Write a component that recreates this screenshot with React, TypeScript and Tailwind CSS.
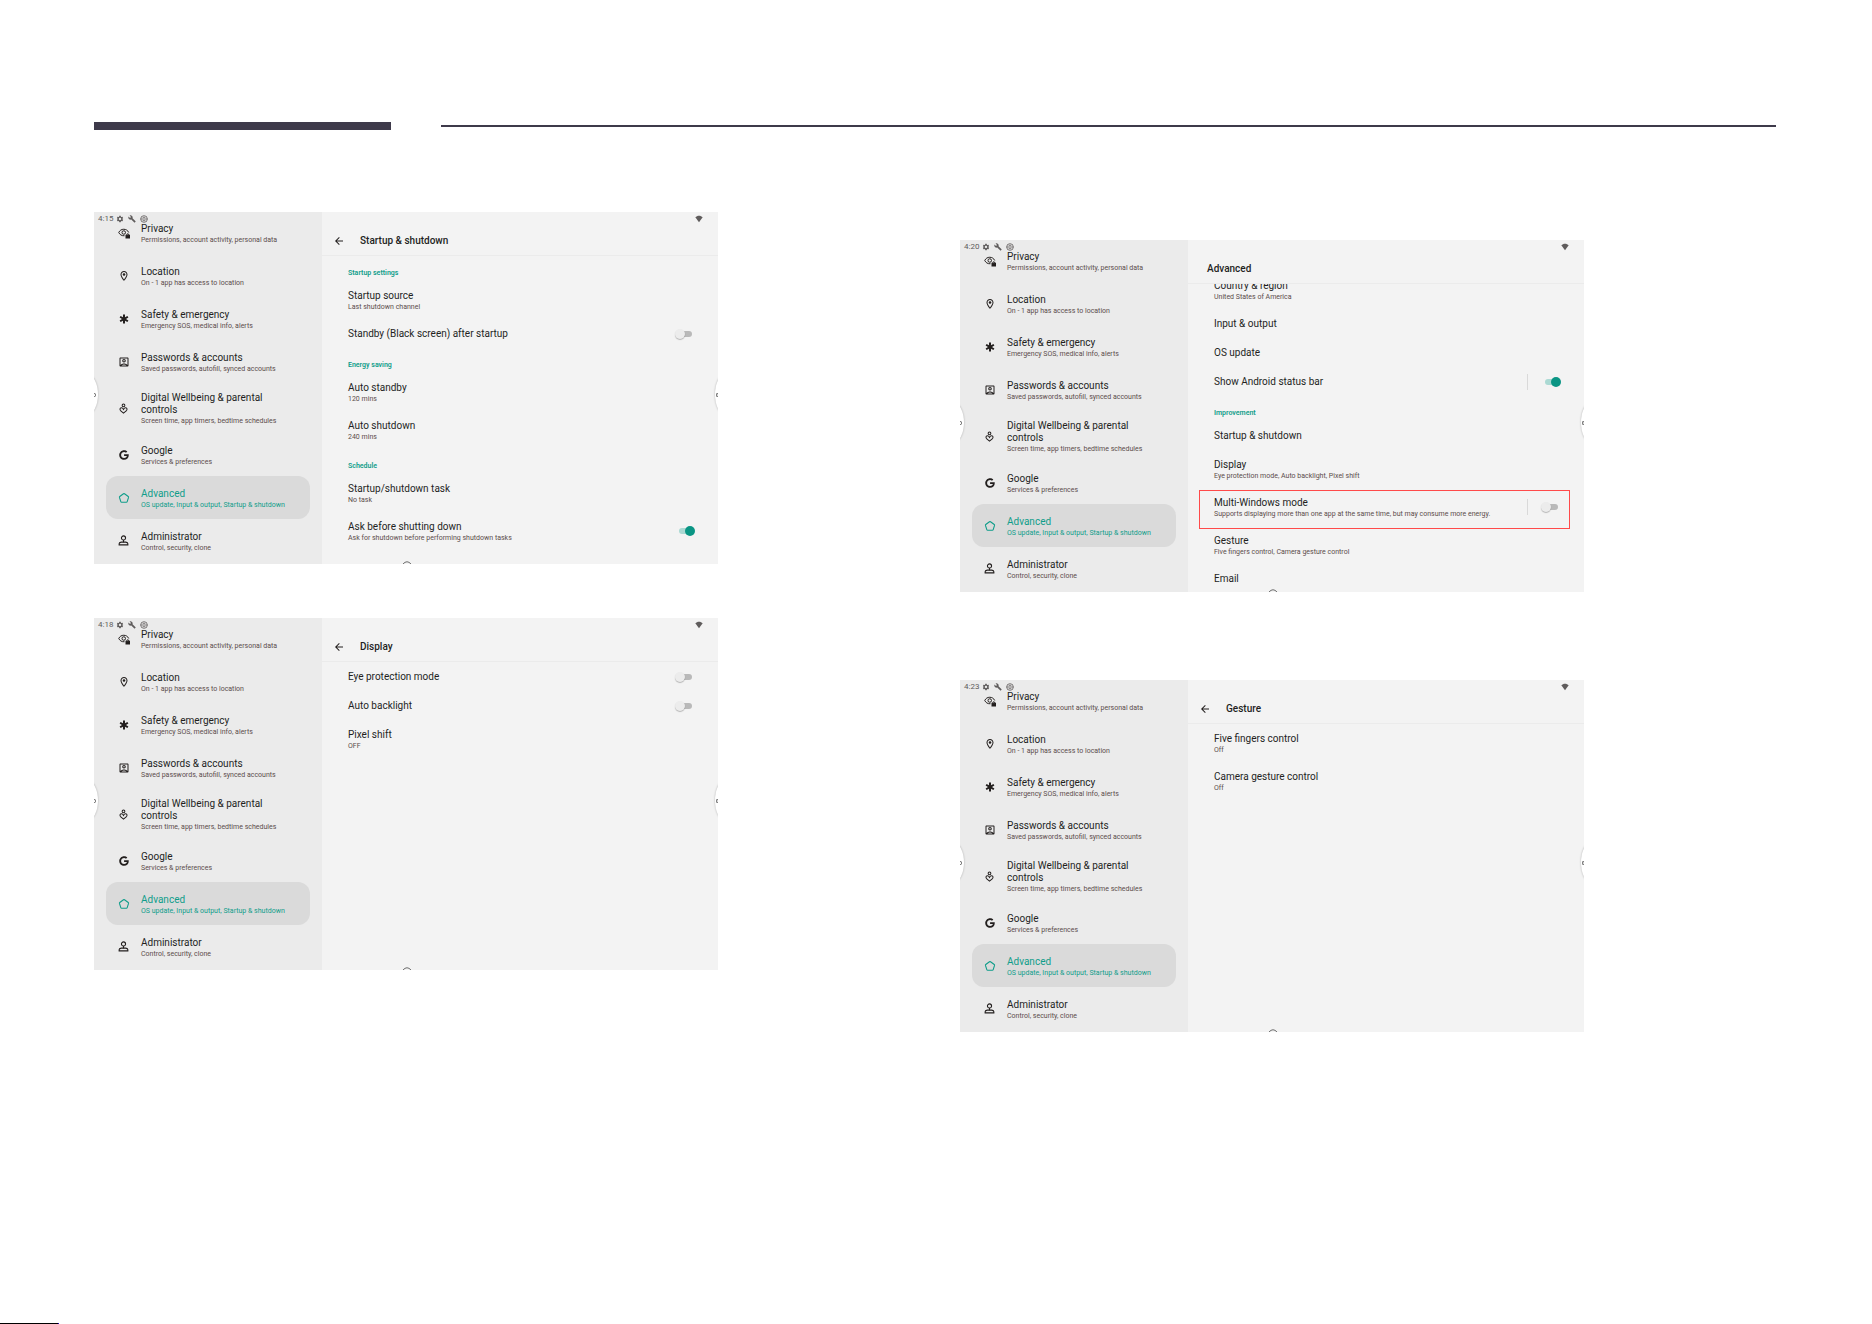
import { useId, useState } from "react";
import type { ReactNode } from "react";
import {
  MdArrowBack,
  MdBuild,
  MdEmergency,
  MdOutlineAccountBox,
  MdOutlineLocationOn,
  MdSettings,
} from "react-icons/md";
import { FaGoogle } from "react-icons/fa";

function PrivacyIcon() {
  return (
    <svg viewBox="0 0 24 24" className="size-3" fill="none" stroke="currentColor" strokeWidth="2" aria-hidden="true">
      <path d="M13 17.500C7 18 3.500 15 1.500 11 3.500 6.800 7 4.500 11.500 4.500S19.500 6.800 21.500 11" />
      <circle cx="11.500" cy="11" r="3.500" />
      <rect x="16" y="16.500" width="7" height="5.500" fill="currentColor" />
      <path d="M17.700 16.500v-1.200a1.800 1.800 0 0 1 3.600 0v1.200" />
    </svg>
  );
}

function WellbeingIcon() {
  return (
    <svg viewBox="0 0 24 24" className="size-[11px]" fill="none" stroke="currentColor" strokeWidth="2.200" aria-hidden="true">
      <circle cx="12" cy="5" r="3" />
      <path d="M12 22l-6.500-5.500C3.500 14.500 4 11 7 10.500c2.500-.300 4 1.500 5 3.500 1-2 2.500-3.800 5-3.500 3 .5 3.500 4 1.500 6z" />
    </svg>
  );
}

function AdvancedIcon() {
  return (
    <svg viewBox="0 0 24 24" className="size-3" fill="none" stroke="currentColor" strokeWidth="2.200" strokeLinejoin="round" aria-hidden="true">
      <path d="M11 3.500q1-.700 2 0l7.500 5.500q.900.700.600 1.800l-2.700 8.400q-.400 1.200-1.600 1.200H7.200q-1.200 0-1.600-1.200L2.900 10.800q-.300-1.100.6-1.800z" />
    </svg>
  );
}

function AdministratorIcon() {
  return (
    <svg viewBox="0 0 24 24" className="size-[11px]" fill="none" stroke="currentColor" strokeWidth="2.400" aria-hidden="true">
      <circle cx="12" cy="6.500" r="4.500" />
      <path d="M12 11v5" />
      <path d="M2.500 21.500v-2.500c0-1.800 2-3 4.500-3.500h10c2.500.5 4.500 1.700 4.500 3.500v2.500z" />
    </svg>
  );
}

function BallIcon() {
  return (
    <svg viewBox="0 0 24 24" className="size-2" fill="none" stroke="currentColor" strokeWidth="2.400" aria-hidden="true">
      <circle cx="12" cy="12" r="10" />
      <path d="M2 12h20M8 7h8M8 17h8" />
    </svg>
  );
}

function WifiIcon() {
  return (
    <svg viewBox="0 0 24 24" className="size-2" fill="currentColor" aria-hidden="true">
      <path d="M12 22L1 7c3-2.700 6.800-4.500 11-4.500S20 4.300 23 7z" />
    </svg>
  );
}

type NavItem = { title: string; sub: string; icon: ReactNode };

const navItems: NavItem[] = [
  { title: "Privacy", sub: "Permissions, account activity, personal data", icon: <PrivacyIcon /> },
  { title: "Location", sub: "On - 1 app has access to location", icon: <MdOutlineLocationOn className="size-3" /> },
  { title: "Safety & emergency", sub: "Emergency SOS, medical info, alerts", icon: <MdEmergency className="size-3" /> },
  { title: "Passwords & accounts", sub: "Saved passwords, autofill, synced accounts", icon: <MdOutlineAccountBox className="size-3" /> },
  { title: "Digital Wellbeing & parental controls", sub: "Screen time, app timers, bedtime schedules", icon: <WellbeingIcon /> },
  { title: "Google", sub: "Services & preferences", icon: <FaGoogle className="size-[10px]" /> },
  { title: "Advanced", sub: "OS update, Input & output, Startup & shutdown", icon: <AdvancedIcon /> },
  { title: "Administrator", sub: "Control, security, clone", icon: <AdministratorIcon /> },
];

function Sidebar() {
  return (
    <nav aria-label="Settings" className="w-[228px] shrink-0 bg-[#ebebeb] px-3">
      <ul className="-mt-px">
        {navItems.map((item) => {
          const active = item.title === "Advanced";
          return (
            <li key={item.title}>
              <a
                href="#"
                aria-current={active ? "page" : undefined}
                className={
                  active
                    ? "flex min-h-[43px] items-center rounded-xl bg-[#dadada] text-[#0f9d8a]"
                    : "flex min-h-[43px] items-center rounded-xl text-[#231f1e]"
                }
              >
                <span className="flex w-[35px] shrink-0 justify-center">{item.icon}</span>
                <span className="flex flex-col pt-[9px] pb-[7px]">
                  <span className="max-w-[130px] text-[10px] leading-[12px]">{item.title}</span>
                  <span className={active ? "text-[7px] leading-[10px] whitespace-nowrap" : "text-[7px] leading-[10px] whitespace-nowrap text-[#5b4d4b]"}>
                    {item.sub}
                  </span>
                </span>
              </a>
            </li>
          );
        })}
      </ul>
    </nav>
  );
}

type Row = {
  kind: "row" | "section";
  title: string;
  sub?: string;
  toggle?: boolean;
  divider?: boolean;
  highlight?: boolean;
};

function Toggle({ id, initial }: { id: string; initial: boolean }) {
  const [on, setOn] = useState(initial);
  return (
    <input
      id={id}
      type="checkbox"
      role="switch"
      checked={on}
      onChange={() => setOn(!on)}
      className="relative h-[10px] w-5 shrink-0 cursor-pointer appearance-none before:absolute before:top-0.5 before:left-1 before:h-1.5 before:w-[13px] before:rounded-full before:bg-[#b9b9b9] after:absolute after:top-0 after:left-0 after:size-[10px] after:rounded-full after:bg-[#ececec] after:shadow-[0_1px_1px_rgba(0,0,0,0.25)] checked:before:bg-[#abd9d3] checked:after:left-[10px] checked:after:bg-[#0a9584] checked:after:shadow-none"
    />
  );
}

function SettingRow({ row }: { row: Row }) {
  const id = useId();
  if (row.kind === "section") {
    return <h3 className="h-[25px] pt-3 pl-[26px] text-[7px] leading-[10px] font-semibold text-[#0f9d8a]">{row.title}</h3>;
  }
  const text = (
    <>
      <span className="block text-[10px] leading-[12px] text-[#231f1e]">{row.title}</span>
      {row.sub && <span className="block text-[7px] leading-[10px] text-[#5b4d4b]">{row.sub}</span>}
    </>
  );
  const pad = row.sub ? "pt-[9px] pb-[7px]" : "pt-[9px] pb-2";
  return (
    <div className="relative flex items-center pr-[23px] pl-[26px]">
      {row.toggle === undefined ? (
        <button type="button" className={`${pad} w-full cursor-pointer text-left`}>
          {text}
        </button>
      ) : (
        <>
          <label htmlFor={id} className={`${pad} flex-1 cursor-pointer`}>
            {text}
          </label>
          {row.divider && <span className="mr-[13px] h-4 w-px bg-[#d9d9d9]" />}
          <Toggle id={id} initial={row.toggle} />
        </>
      )}
      {row.highlight && <span className="pointer-events-none absolute top-0.5 right-[14px] -bottom-[3px] left-[11px] border border-[#ff4a4a]" />}
    </div>
  );
}

type Screen = { time: string; title: string; back: boolean; scrolled?: boolean; rows: Row[] };

function SettingsScreen({ screen }: { screen: Screen }) {
  return (
    <section
      aria-label={screen.title}
      className="relative flex h-[352px] w-full max-w-[624px] overflow-hidden bg-[#f3f3f3]"
    >
      <Sidebar />
      <div className="flex min-w-0 flex-1 flex-col">
        <header className="flex h-11 shrink-0 items-center border-b border-[#ebebeb] pt-[14px] text-[#231f1e]">
          {screen.back ? (
            <button type="button" aria-label="Back" className="flex w-[38px] shrink-0 cursor-pointer justify-center pr-1">
              <MdArrowBack className="size-3" />
            </button>
          ) : (
            <span className="w-[19px]" />
          )}
          <h2 className="text-[10px] leading-[12px] font-medium">{screen.title}</h2>
        </header>
        <div className="min-h-0 flex-1 overflow-hidden">
          <div className={screen.scrolled ? "-mt-[13px]" : ""}>
            {screen.rows.map((row) => (
              <SettingRow key={row.title} row={row} />
            ))}
          </div>
        </div>
      </div>

      <div className="absolute inset-x-0 top-0 flex h-[13px] items-center justify-between pr-[15px] pl-1 text-[#5f5c5c]">
        <span className="flex items-center gap-1">
          <span className="-mr-px text-[8px] leading-[12px]">{screen.time}</span>
          <MdSettings className="size-2" />
          <MdBuild className="size-2" />
          <BallIcon />
        </span>
        <WifiIcon />
      </div>

      <span className="absolute top-[163px] -left-4 flex h-[39px] w-5 items-center justify-end rounded-[50%] bg-white pr-0.5 shadow-[0_0_2px_rgba(0,0,0,0.3)]">
        <span className="h-1 w-0.5 rounded-r-sm border border-l-0 border-[#6b6b6b]" />
      </span>
      <span className="absolute top-[163px] -right-4 flex h-[39px] w-[19px] items-center rounded-[50%] bg-white pl-px shadow-[0_0_2px_rgba(0,0,0,0.3)]">
        <span className="h-1 w-0.5 rounded-l-sm border border-r-0 border-[#6b6b6b]" />
      </span>
      <svg viewBox="0 0 10 3" className="absolute bottom-0 left-[308px] h-[3px] w-[10px]" fill="none" stroke="#6b6b6b" aria-hidden="true">
        <path d="M1 3Q5-1.500 9 3" />
      </svg>
    </section>
  );
}

const startup: Screen = {
  time: "4:15",
  title: "Startup & shutdown",
  back: true,
  rows: [
    { kind: "section", title: "Startup settings" },
    { kind: "row", title: "Startup source", sub: "Last shutdown channel" },
    { kind: "row", title: "Standby (Black screen) after startup", toggle: false },
    { kind: "section", title: "Energy saving" },
    { kind: "row", title: "Auto standby", sub: "120 mins" },
    { kind: "row", title: "Auto shutdown", sub: "240 mins" },
    { kind: "section", title: "Schedule" },
    { kind: "row", title: "Startup/shutdown task", sub: "No task" },
    { kind: "row", title: "Ask before shutting down", sub: "Ask for shutdown before performing shutdown tasks", toggle: true },
  ],
};

const display: Screen = {
  time: "4:18",
  title: "Display",
  back: true,
  rows: [
    { kind: "row", title: "Eye protection mode", toggle: false },
    { kind: "row", title: "Auto backlight", toggle: false },
    { kind: "row", title: "Pixel shift", sub: "OFF" },
  ],
};

const advanced: Screen = {
  time: "4:20",
  title: "Advanced",
  back: false,
  scrolled: true,
  rows: [
    { kind: "row", title: "Country & region", sub: "United States of America" },
    { kind: "row", title: "Input & output" },
    { kind: "row", title: "OS update" },
    { kind: "row", title: "Show Android status bar", toggle: true, divider: true },
    { kind: "section", title: "Improvement" },
    { kind: "row", title: "Startup & shutdown" },
    { kind: "row", title: "Display", sub: "Eye protection mode, Auto backlight, Pixel shift" },
    {
      kind: "row",
      title: "Multi-Windows mode",
      sub: "Supports displaying more than one app at the same time, but may consume more energy.",
      toggle: false,
      divider: true,
      highlight: true,
    },
    { kind: "row", title: "Gesture", sub: "Five fingers control, Camera gesture control" },
    { kind: "row", title: "Email" },
  ],
};

const gesture: Screen = {
  time: "4:23",
  title: "Gesture",
  back: true,
  rows: [
    { kind: "row", title: "Five fingers control", sub: "Off" },
    { kind: "row", title: "Camera gesture control", sub: "Off" },
  ],
};

export default function App() {
  return (
    <div className="flex min-h-screen flex-col bg-white font-[Roboto,sans-serif]">
      <div className="flex items-center pt-[122px] pr-24 pl-[94px]">
        <div className="h-2 w-[297px] bg-[#3e3a4a]" />
        <div className="ml-[50px] h-0.5 flex-1 bg-[#3e3a4a]" />
      </div>
      <main className="grid flex-1 grid-cols-2 items-start gap-x-[50px] pt-[82px] pr-24 pl-[94px]">
        <div className="flex flex-col gap-[54px]">
          <SettingsScreen screen={startup} />
          <SettingsScreen screen={display} />
        </div>
        <div className="flex flex-col gap-[88px] pt-7">
          <SettingsScreen screen={advanced} />
          <SettingsScreen screen={gesture} />
        </div>
      </main>
      <div className="flex h-px">
        <div className="w-[58px] bg-black" />
        <div className="w-px bg-[#2a00c0]" />
      </div>
    </div>
  );
}
